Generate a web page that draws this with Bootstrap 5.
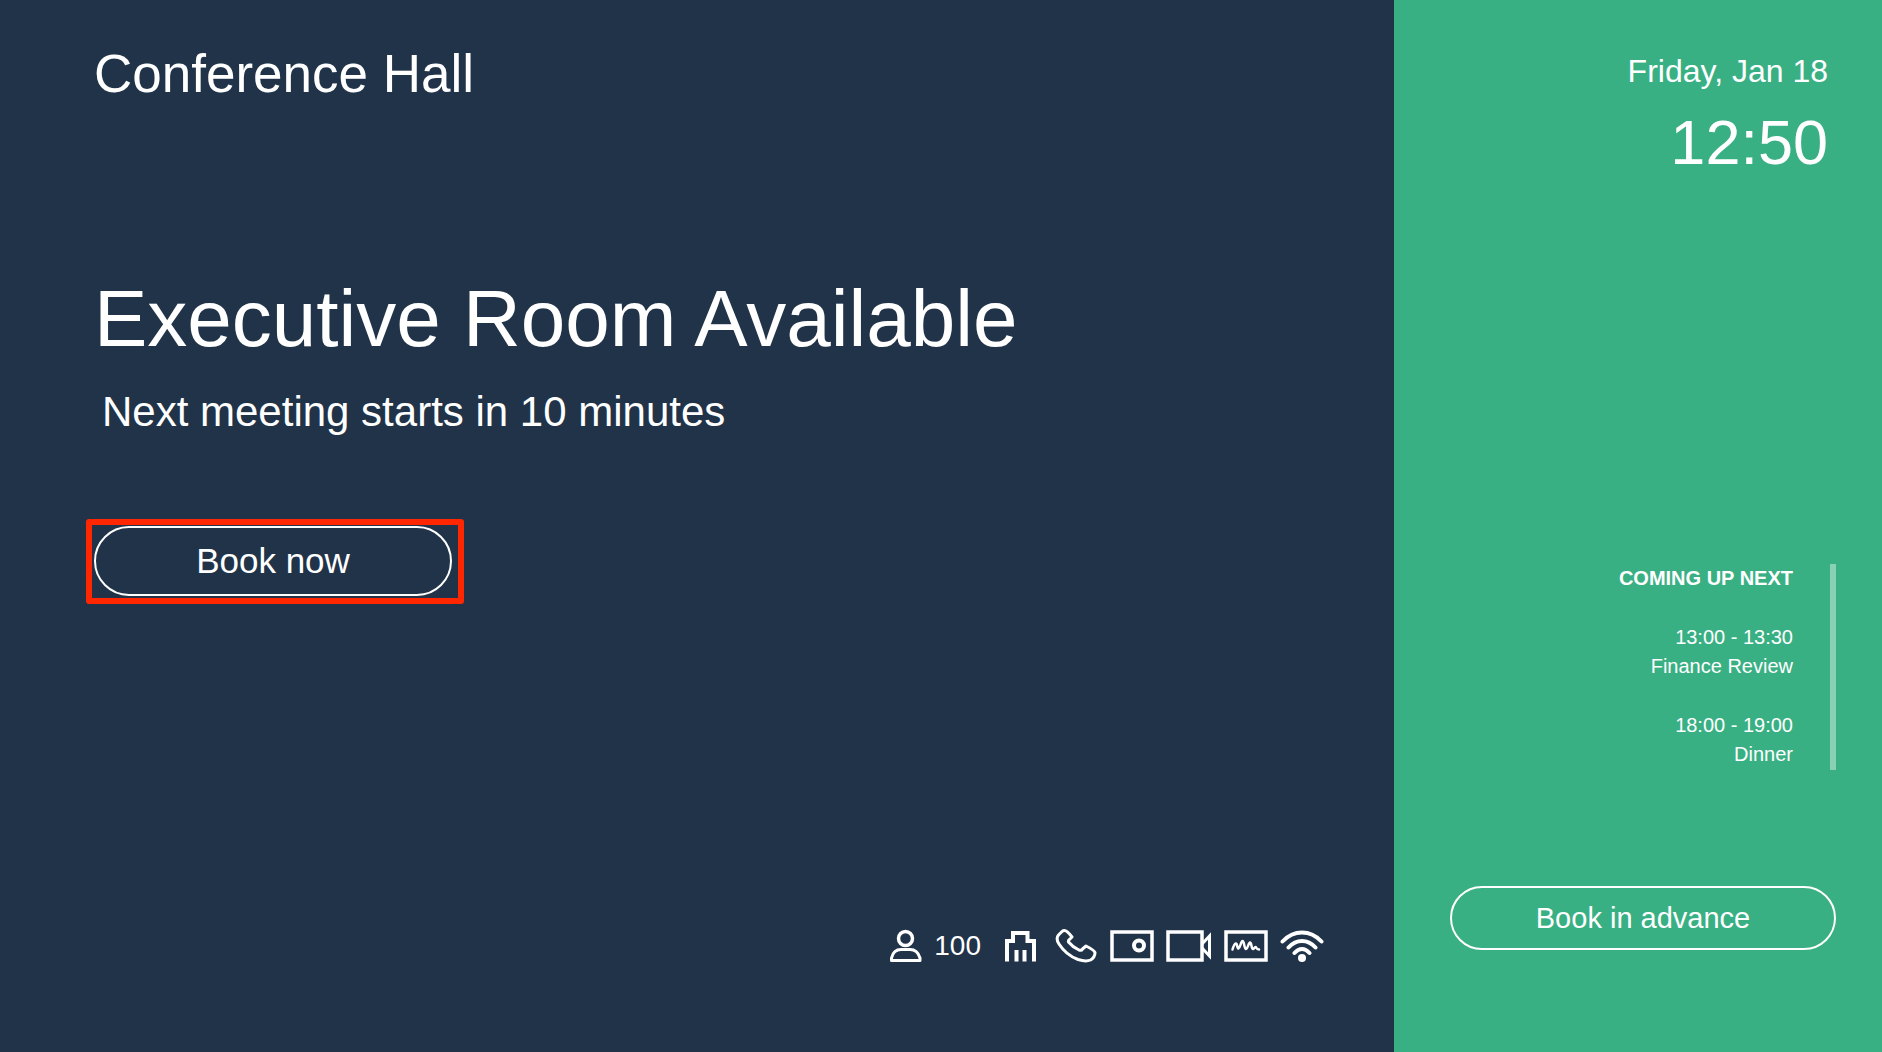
<!DOCTYPE html>
<html lang="en">
<head>
<meta charset="utf-8">
<meta name="viewport" content="width=device-width, initial-scale=1">
<title>Executive Room</title>
<link href="https://cdn.jsdelivr.net/npm/bootstrap@5.3.0/dist/css/bootstrap.min.css" rel="stylesheet">
<style>
  body { font-family: "Liberation Sans", Arial, sans-serif; background: #213349; color: #fff; }
  .room-panel { padding: 44px 70px 89px 94px; background: #213349; }
  .side-panel { flex: 0 0 488px; padding: 51px 46px 102px 56px; background: #39b083; }
  .hall-name { font-size: 53px; line-height: 60px; }
  .room-status { font-size: 80px; line-height: 90px; margin-top: 170px; font-weight: 400; }
  .next-meeting { font-size: 42px; line-height: 48px; margin-top: 24px; }
  .callout-frame { width: 378px; max-width: 100%; margin: 83px 0 0 -8px; padding: 1px 6px 2px 2px; border: 6px solid #ff2600; border-radius: 3px; }
  .btn-pill { --bs-btn-color: #fff; --bs-btn-border-color: #fff; --bs-btn-border-width: 2px; --bs-btn-border-radius: 35px;
    --bs-btn-hover-color: #213349; --bs-btn-hover-bg: #fff; --bs-btn-padding-y: 0; }
  .btn-now { --bs-btn-font-size: 35px; --bs-btn-line-height: 66px; }
  .btn-advance { --bs-btn-font-size: 29px; --bs-btn-line-height: 60px; }
  .amenities { gap: 12px; font-size: 28px; line-height: 34px; }
  .amenities svg { display: block; fill: none; stroke: #fff; stroke-width: 3.5; }
  .today { font-size: 32px; line-height: 40px; }
  .clock { font-size: 63px; line-height: 72px; margin-top: 15px; }
  .agenda { font-size: 20px; line-height: 29px; gap: 30px; padding: 0 37px 1px 0; border-right: 6px solid #89d0b5; margin-bottom: 116px; }
  .agenda h2 { font-size: 20px; line-height: 28px; padding-bottom: 1px; }
</style>
<script src="https://cdn.jsdelivr.net/npm/bootstrap@5.3.0/dist/js/bootstrap.bundle.min.js"></script>
</head>
<body>
<div class="d-flex min-vh-100">
  <main class="room-panel d-flex flex-column flex-grow-1">
    <div class="hall-name">Conference Hall</div>
    <h1 class="room-status mb-0">Executive Room Available</h1>
    <p class="next-meeting ms-2 mb-0">Next meeting starts in 10 minutes</p>
    <div class="callout-frame">
      <button type="button" class="btn btn-pill btn-now d-block w-100">Book now</button>
    </div>
    <div class="amenities d-flex align-items-center justify-content-end mt-auto">
      <svg width="32" height="34" viewBox="0 0 32 34" role="img" aria-label="Capacity">
        <circle cx="15.500" cy="9.500" r="7"/>
        <path stroke-width="3" stroke-linejoin="round" d="M1.500 31.500V29Q3.500 20.500 11 20.500H20Q27.500 20.500 30 29V31.500Z"/>
      </svg>
      <span>100</span>
      <svg width="49" height="34" viewBox="0 0 49 34" role="img" aria-label="Network">
        <path stroke-width="4" d="M14 32.500V12H20V4H34.500V12H41V32.500"/>
        <path stroke-width="4" d="M23.500 32.500V21M31.500 32.500V21"/>
      </svg>
      <svg width="44" height="34" viewBox="0 0 44 34" role="img" aria-label="Phone">
        <path stroke-width="3" stroke-linejoin="round" d="M8 2.500L4.500 6Q1.500 9.500 5 15Q12 26 24 30.500Q32 33 36.500 31Q41 28.500 41 23.500Q40 21 32 17L28.500 20Q27.500 22 25 21Q18.500 18 14.500 13Q14 11.500 15.500 10.500L18 8Q13 1.500 10.500 1.500Q9 1.500 8 2.500Z"/>
      </svg>
      <svg width="44" height="34" viewBox="0 0 44 34" role="img" aria-label="Projector">
        <rect x="2" y="3" width="40" height="28"/>
        <circle cx="29" cy="16.500" r="5" stroke-width="4"/>
      </svg>
      <svg width="46" height="34" viewBox="0 0 46 34" role="img" aria-label="Video camera">
        <rect x="2" y="3" width="34" height="28"/>
        <path stroke-width="3" d="M36 15L43.500 7V27L36 19"/>
      </svg>
      <svg width="44" height="34" viewBox="0 0 44 34" role="img" aria-label="Whiteboard">
        <rect x="2" y="3" width="40" height="28"/>
        <path stroke-width="2.500" stroke-linecap="round" stroke-linejoin="round" d="M8.500 20.500C9.500 17 11 14 12 14.500C13.500 15 13 19.500 14.500 19.500C16.500 18.500 17 12 18.500 12C20.500 12 20 20 22 20C24 19.500 24.500 13.500 26 13.500C28 14 27 19.500 29 20C30 20 30.500 18 31.500 18C32.500 18 32 20.500 35 20.500"/>
      </svg>
      <svg width="44" height="34" viewBox="0 0 44 34" role="img" aria-label="Wi-Fi">
        <path stroke-width="4" stroke-linecap="round" d="M2.500 12.500Q11 3.500 22 3.500Q33 3.500 41.500 12.500M8.500 18.500Q14.500 12 22 12Q29.500 12 35.500 18.500M14.500 24Q18 20 22 20Q26 20 29.500 24"/>
        <circle cx="22" cy="29" r="4" fill="#fff" stroke="none"/>
      </svg>
    </div>
  </main>
  <aside class="side-panel d-flex flex-column text-end">
    <div class="today pe-2">Friday, Jan 18</div>
    <div class="clock pe-2">12:50</div>
    <section class="agenda d-flex flex-column mt-auto">
      <h2 class="fw-bold mb-0">COMING UP NEXT</h2>
      <div>
        <div>13:00 - 13:30</div>
        <div>Finance Review</div>
      </div>
      <div>
        <div>18:00 - 19:00</div>
        <div>Dinner</div>
      </div>
    </section>
    <button type="button" class="btn btn-pill btn-advance w-100">Book in advance</button>
  </aside>
</div>
</body>
</html>
